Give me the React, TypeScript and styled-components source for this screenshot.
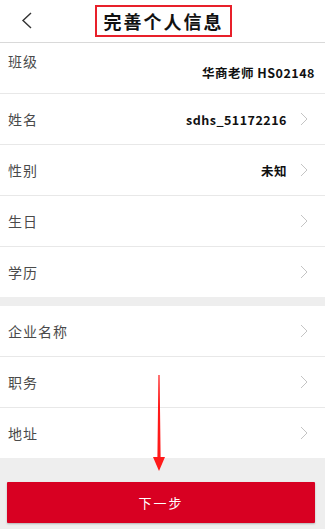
import React from 'react';
import styled, { createGlobalStyle } from 'styled-components';

const GlobalStyle = createGlobalStyle`
  html, body {
    margin: 0;
    padding: 0;
    background: #eeeeee;
  }
  body {
    font-family: "Noto Sans CJK SC", "Noto Sans", "Liberation Sans", sans-serif;
  }
`;

type Row = { label: string; value?: string; arrow?: boolean; offset?: boolean };

const groupOne: Row[] = [
  { label: '班级', value: '华商老师 HS02148', offset: true },
  { label: '姓名', value: 'sdhs_51172216', arrow: true },
  { label: '性别', value: '未知', arrow: true },
  { label: '生日', arrow: true },
  { label: '学历', arrow: true },
];

const groupTwo: Row[] = [
  { label: '企业名称', arrow: true },
  { label: '职务', arrow: true },
  { label: '地址', arrow: true },
];

function Chevron() {
  return (
    <ChevronIcon width="8" height="14" viewBox="0 0 8 14">
      <polyline points="1,1 7,7 1,13" fill="none" stroke="#c4c4c4" strokeWidth="1" />
    </ChevronIcon>
  );
}

function InfoGroup({ rows }: { rows: Row[] }) {
  return (
    <Group>
      {rows.map((row) => (
        <ItemRow key={row.label}>
          <Label $offset={row.offset}>{row.label}</Label>
          <Right $offset={row.offset}>
            {row.value ? <Value>{row.value}</Value> : null}
            {row.arrow ? <Chevron /> : null}
          </Right>
        </ItemRow>
      ))}
    </Group>
  );
}

export default function App() {
  return (
    <Page>
      <GlobalStyle />
      <Header>
        <BackButton type="button" aria-label="返回">
          <svg width="12" height="17" viewBox="0 0 12 17">
            <polyline points="10,1 2,8.5 10,16" fill="none" stroke="#333" strokeWidth="1.4" />
          </svg>
        </BackButton>
        <TitleBox>完善个人信息</TitleBox>
      </Header>
      <InfoGroup rows={groupOne} />
      <InfoGroup rows={groupTwo} />
      <Footer>
        <NextButton type="button">下一步</NextButton>
      </Footer>
      <Arrow width="14" height="96" viewBox="0 0 14 96">
        <polygon points="6.4,0 7.6,0 8.6,82 13,82 7,96 1,82 5.4,82" fill="#ff1a1a" />
      </Arrow>
    </Page>
  );
}

const Page = styled.div`
  position: relative;
  width: 325px;
  min-height: 529px;
  background: #eeeeee;
  display: flex;
  flex-direction: column;
`;

const Header = styled.header`
  position: relative;
  height: 42px;
  background: #ffffff;
  border-bottom: 1px solid #d9d9d9;
  display: flex;
  align-items: center;
  justify-content: center;
`;

const BackButton = styled.button`
  position: absolute;
  left: 21px;
  top: 12px;
  background: none;
  border: none;
  padding: 0;
  display: flex;
  cursor: pointer;
`;

const TitleBox = styled.div`
  box-sizing: border-box;
  width: 137px;
  height: 32px;
  margin-left: 2px;
  border: 2px solid #e8202a;
  display: flex;
  align-items: center;
  justify-content: center;
  font-size: 18px;
  font-weight: 700;
  letter-spacing: 2px;
  color: #111;
`;

const Group = styled.section`
  background: #ffffff;
  margin-bottom: 9px;
`;

const ItemRow = styled.div`
  height: 50px;
  padding: 0 17px 0 8px;
  display: flex;
  align-items: center;
  justify-content: space-between;
  border-bottom: 1px solid #e8e8e8;

  &:last-child {
    border-bottom: none;
  }
`;

const Label = styled.span<{ $offset?: boolean }>`
  font-size: 14px;
  color: #4a4a4a;
  letter-spacing: 1px;
  transform: ${(p) => (p.$offset ? 'translateY(-7px)' : 'none')};
`;

const Right = styled.div<{ $offset?: boolean }>`
  display: flex;
  align-items: center;
  gap: 13px;
  margin-right: ${(p) => (p.$offset ? '-7px' : '0')};
  transform: ${(p) => (p.$offset ? 'translateY(4px)' : 'none')};
`;

const Value = styled.span`
  font-size: 12.5px;
  font-weight: 700;
  color: #111;
  letter-spacing: 0.5px;
`;

const ChevronIcon = styled.svg`
  display: block;
`;

const Footer = styled.div`
  flex: 1;
  padding: 15px 10px 8px 7px;
`;

const NextButton = styled.button`
  width: 100%;
  height: 41px;
  border: none;
  border-radius: 1px;
  background: #d80022;
  color: #ffffff;
  font-family: inherit;
  font-size: 13px;
  letter-spacing: 2px;
  box-shadow: 0 1px 2px rgba(0, 0, 0, 0.25);
  cursor: pointer;
`;

const Arrow = styled.svg`
  position: absolute;
  left: 152px;
  top: 375px;
`;
